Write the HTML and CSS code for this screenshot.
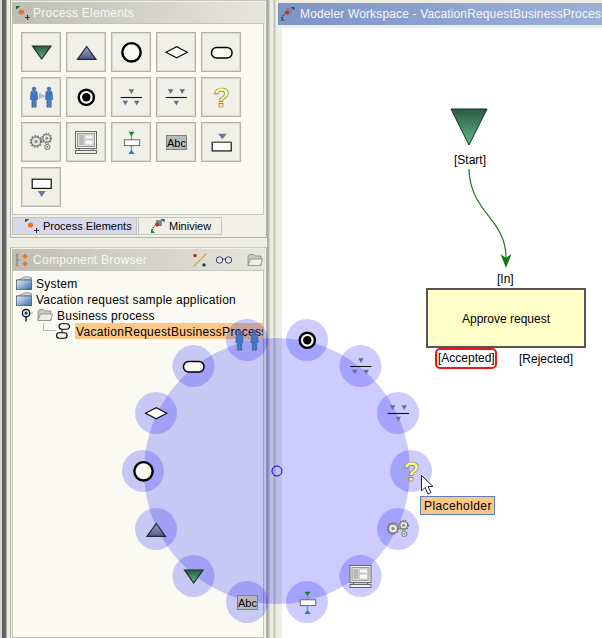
FILE: index.html
```html
<!DOCTYPE html>
<html lang="en">
<head>
    <meta charset="UTF-8">
    <meta name="viewport" content="width=device-width, initial-scale=1.0">
    <title>Modeler Workspace</title>
    <link rel="stylesheet" href="styles.css">
</head>
<body>
    <!-- shared icons -->
    <svg class="sprite" aria-hidden="true">
        <defs>
            <linearGradient id="greenFill" x1="0" y1="0" x2="0" y2="1">
                <stop offset="0" stop-color="#2b5a48"/>
                <stop offset="1" stop-color="#62b888"/>
            </linearGradient>
            <linearGradient id="blueFill" x1="0" y1="0" x2="0" y2="1">
                <stop offset="0" stop-color="#9aa4cc"/>
                <stop offset="1" stop-color="#4f5a88"/>
            </linearGradient>
            <linearGradient id="folderBlue" x1="0" y1="0" x2="1" y2="1">
                <stop offset="0" stop-color="#e8f0f8"/>
                <stop offset="1" stop-color="#2f6aa8"/>
            </linearGradient>
        </defs>
        <symbol id="i-down" viewBox="0 0 40 40">
            <path d="M11.5 14H30L20.7 27Z" fill="url(#greenFill)" stroke="#1c2c24" stroke-width="1.2"/>
        </symbol>
        <symbol id="i-up" viewBox="0 0 40 40">
            <path d="M11.5 27.3H30L20.7 14.5Z" fill="url(#blueFill)" stroke="#23263a" stroke-width="1.2"/>
        </symbol>
        <symbol id="i-circle" viewBox="0 0 40 40">
            <circle cx="20.5" cy="20.3" r="9.2" fill="#fbfaf2" stroke="#000" stroke-width="2.4"/>
        </symbol>
        <symbol id="i-diamond" viewBox="0 0 40 40">
            <path d="M10 20.3L20.7 14.8L31.3 20.3L20.7 25.8Z" fill="#fff" stroke="#111" stroke-width="1.2"/>
        </symbol>
        <symbol id="i-round" viewBox="0 0 40 40">
            <rect x="10.5" y="15.5" width="20.5" height="10.5" rx="5" fill="#fbfaf2" stroke="#000" stroke-width="1.5"/>
        </symbol>
        <symbol id="i-people" viewBox="0 0 40 40">
            <g fill="#3f78c8" stroke="#2c5288" stroke-width=".5">
                <circle cx="13" cy="12" r="1.9"/>
                <path d="M10 14.5h6l.8 8h-1.6v7.8h-1.7v-7h-.9v7h-1.7v-7.8H9.2Z"/>
                <circle cx="28" cy="12" r="1.9"/>
                <path d="M25 14.5h6l.8 8h-1.6v7.8h-1.7v-7h-.9v7h-1.7v-7.8h-1.6Z"/>
            </g>
            <path d="M18.5 16.5l5 2.5-5 2.5Z" fill="#b8b8d0" stroke="#8888a0" stroke-width=".5"/>
        </symbol>
        <symbol id="i-target" viewBox="0 0 40 40">
            <circle cx="20.3" cy="20.3" r="7.6" fill="#fbfaf2" stroke="#000" stroke-width="2.4"/>
            <circle cx="20.3" cy="20.3" r="4.2" fill="#000"/>
        </symbol>
        <symbol id="i-split" viewBox="0 0 40 40">
            <path d="M9.7 20.5H31" stroke="#111" stroke-width="1.1"/>
            <path d="M17.6 12.3h5.6l-2.8 4.6ZM11.5 23.7h5.6l-2.8 4.6ZM22.9 23.7h5.6l-2.8 4.6Z" fill="#667090"/>
        </symbol>
        <symbol id="i-join" viewBox="0 0 40 40">
            <path d="M9.7 20.5H31" stroke="#111" stroke-width="1.1"/>
            <path d="M11.8 12.3h5.6l-2.8 4.6ZM23.4 12.3H29l-2.8 4.6ZM17.6 23.7h5.6l-2.8 4.6Z" fill="#667090"/>
        </symbol>
        <symbol id="i-gears" viewBox="0 0 40 40">
            <g fill="#e4e4e0" stroke="#777">
                <circle cx="15" cy="19.5" r="4.6" stroke-width="1.2"/>
                <circle cx="15" cy="19.5" r="5.6" fill="none" stroke-width="1.6" stroke-dasharray="1.6 1.4"/>
                <circle cx="25.7" cy="16.3" r="3.8" stroke-width="1.1"/>
                <circle cx="25.7" cy="16.3" r="4.8" fill="none" stroke-width="1.4" stroke-dasharray="1.4 1.2"/>
                <circle cx="26.3" cy="25" r="2.6" stroke-width="1"/>
            </g>
            <circle cx="15" cy="19.5" r="1.6" fill="#888"/>
            <circle cx="25.7" cy="16.3" r="1.4" fill="#888"/>
            <circle cx="26.3" cy="25" r="1" fill="#888"/>
        </symbol>
        <symbol id="i-screen" viewBox="0 0 40 40">
            <rect x="9.5" y="9.5" width="21" height="17" fill="#f4f4f0" stroke="#666"/>
            <rect x="11.5" y="11.5" width="17" height="13" fill="#ddd" stroke="#999"/>
            <rect x="13" y="13" width="5" height="10" fill="#bbb"/>
            <path d="M19 13h8v4h-8ZM19 18h8v5h-8Z" fill="#f8f8f4" stroke="#aaa" stroke-width=".5"/>
            <rect x="9.5" y="28.5" width="21" height="3" fill="#eee" stroke="#666"/>
            <path d="M13 26.5v2M27 26.5v2" stroke="#666"/>
        </symbol>
        <symbol id="i-call" viewBox="0 0 40 40">
            <path d="M20.5 13v16" stroke="#9090c0" stroke-width="1.4"/>
            <path d="M17.5 9.7h6l-3 4.3Z" fill="#118811"/>
            <path d="M17.5 32h6l-3-4.3Z" fill="#1878e0"/>
            <rect x="13.3" y="17.8" width="15.4" height="5.8" fill="#fff" stroke="#666"/>
        </symbol>
        <symbol id="i-abc" viewBox="0 0 40 40">
            <rect x="10.5" y="13.5" width="20" height="14" fill="#b8b8b8" stroke="#808080"/>
        </symbol>
        <symbol id="i-boxtop" viewBox="0 0 40 40">
            <path d="M17 11.7h8.7l-4.3 5.6Z" fill="#6f7a9a"/>
            <rect x="11.2" y="20.3" width="19" height="8.6" fill="#fff" stroke="#111" stroke-width="1.2"/>
            <path d="M11.2 20h19" stroke="#999" stroke-width="1"/>
        </symbol>
        <symbol id="i-boxbottom" viewBox="0 0 40 40">
            <rect x="11.2" y="12.2" width="19" height="9.2" fill="#fff" stroke="#111" stroke-width="1.2"/>
            <path d="M16.7 24h8l-4 6Z" fill="#6f7a9a"/>
        </symbol>
        <symbol id="i-add" viewBox="0 0 16 16">
            <path d="M1 1h4.5L1 4.5Z" fill="#1a6a3a"/>
            <circle cx="6.5" cy="7" r="2.6" fill="#f07020"/>
            <path d="M12.5 10v5M10 12.5h5" stroke="#333" stroke-width="1"/>
        </symbol>
        <symbol id="i-mini" viewBox="0 0 16 16">
            <rect x="6" y="2" width="6" height="6" fill="#888"/>
            <path d="M10.5 1h4v3.5Z" fill="#1050a0"/>
            <path d="M5.5 7c-2 1.5-3 3.5-3.500 6" fill="none" stroke="#222" stroke-dasharray="1.5 1"/>
            <circle cx="7" cy="6.5" r="2" fill="#e02020"/>
            <path d="M1 11v4h4Z" fill="#108040"/>
        </symbol>
        <symbol id="i-comp" viewBox="0 0 16 16">
            <path d="M3.5 2H2v12h1.500M2 8h3" fill="none" stroke="#777"/>
            <path d="M10 1.5l2.700 2.700L10 7 7.300 4.200ZM10 9l2.700 2.700L10 14.500l-2.700-2.800Z" fill="#e87820"/>
        </symbol>
        <symbol id="i-link" viewBox="0 0 16 16">
            <path d="M1.5 14.5L14.5 1.5" stroke="#e8a030" stroke-width="1.2"/>
            <circle cx="3" cy="3.5" r="1.7" fill="#d02020"/>
            <circle cx="12" cy="13" r="1.7" fill="#104080"/>
        </symbol>
        <symbol id="i-glass" viewBox="0 0 18 12">
            <circle cx="4.5" cy="6" r="3.2" fill="#dfe6f0" stroke="#445"/>
            <circle cx="13.5" cy="6" r="3.2" fill="#dfe6f0" stroke="#445"/>
            <path d="M7.5 5h3" stroke="#445"/>
        </symbol>
        <symbol id="i-folder" viewBox="0 0 16 14">
            <path d="M1 12.5V3l1.500-1.500h4L8 3h6v9.500Z" fill="#c8c8c0" stroke="#888" stroke-width=".8"/>
            <path d="M1 12.5L3.500 6H15.500l-2 6.500Z" fill="#eeeee8" stroke="#888" stroke-width=".8"/>
        </symbol>
        <symbol id="i-project" viewBox="0 0 16 14">
            <path d="M.5 4.5L10 .5l5.500 1v2Z" fill="#c8d8e8" stroke="#667" stroke-width=".6"/>
            <rect x=".5" y="4" width="15" height="10" fill="url(#folderBlue)" stroke="#335" stroke-width=".6"/>
        </symbol>
        <symbol id="i-pin" viewBox="0 0 14 16">
            <path d="M10 6h4" stroke="#8aa" stroke-width="1"/>
            <path d="M6.5 9v6" stroke="#000" stroke-width="1.4"/>
            <circle cx="6.5" cy="6" r="4" fill="#c8d8e8" stroke="#000" stroke-width="1.3"/>
            <circle cx="6.5" cy="6" r="1.5" fill="#236"/>
        </symbol>
        <symbol id="i-node" viewBox="0 0 14 16">
            <rect x="3" y=".8" width="10.5" height="5.4" rx="2.7" fill="#fbfaf2" stroke="#000" stroke-width="1.1"/>
            <rect x=".6" y="9.8" width="10.5" height="5.4" rx="2.7" fill="#fbfaf2" stroke="#000" stroke-width="1.1"/>
            <path d="M6 6.2v3.6" stroke="#000"/>
        </symbol>
    </svg>

    <div class="app">
        <div class="rail"></div>

        <div class="left">
            <section class="panel panel-top">
                <div class="panel-head">
                    <svg class="head-icon"><use href="#i-add"/></svg>
                    <span class="panel-title">Process Elements</span>
                </div>
                <div class="palette">
                    <div class="tool"><svg><use href="#i-down"/></svg></div>
                    <div class="tool"><svg><use href="#i-up"/></svg></div>
                    <div class="tool"><svg><use href="#i-circle"/></svg></div>
                    <div class="tool"><svg><use href="#i-diamond"/></svg></div>
                    <div class="tool"><svg><use href="#i-round"/></svg></div>
                    <div class="tool"><svg><use href="#i-people"/></svg></div>
                    <div class="tool"><svg><use href="#i-target"/></svg></div>
                    <div class="tool"><svg><use href="#i-split"/></svg></div>
                    <div class="tool"><svg><use href="#i-join"/></svg></div>
                    <div class="tool"><svg><text x="20.5" y="29.5" text-anchor="middle" class="qmark">?</text></svg></div>
                    <div class="tool"><svg><use href="#i-gears"/></svg></div>
                    <div class="tool"><svg><use href="#i-screen"/></svg></div>
                    <div class="tool"><svg><use href="#i-call"/></svg></div>
                    <div class="tool"><svg><use href="#i-abc"/><text x="20.5" y="24.5" text-anchor="middle" class="abc">Abc</text></svg></div>
                    <div class="tool"><svg><use href="#i-boxtop"/></svg></div>
                    <div class="tool"><svg><use href="#i-boxbottom"/></svg></div>
                </div>
                <div class="tabs">
                    <div class="tab tab-active"><svg class="head-icon"><use href="#i-add"/></svg>Process Elements</div>
                    <div class="tab"><svg class="head-icon"><use href="#i-mini"/></svg>Miniview</div>
                </div>
            </section>

            <section class="panel panel-bottom">
                <div class="panel-head">
                    <svg class="head-icon"><use href="#i-comp"/></svg>
                    <span class="panel-title">Component Browser</span>
                    <div class="head-tools">
                        <svg class="tool-link"><use href="#i-link"/></svg>
                        <svg class="tool-glass"><use href="#i-glass"/></svg>
                        <svg class="tool-folder"><use href="#i-folder"/></svg>
                    </div>
                </div>
                <div class="tree">
                    <div class="row"><svg class="tree-icon"><use href="#i-project"/></svg><span>System</span></div>
                    <div class="row"><svg class="tree-icon"><use href="#i-project"/></svg><span>Vacation request sample application</span></div>
                    <div class="row row-child">
                        <svg class="tree-pin"><use href="#i-pin"/></svg>
                        <svg class="tree-icon"><use href="#i-folder"/></svg>
                        <span>Business process</span>
                    </div>
                    <div class="row row-leaf">
                        <span class="elbow"></span>
                        <svg class="tree-node"><use href="#i-node"/></svg>
                        <span class="selected">VacationRequestBusinessProcess</span>
                    </div>
                </div>
            </section>
        </div>

        <div class="splitter"></div>

        <main class="work">
            <div class="work-head">
                <svg class="head-icon"><use href="#i-mini"/></svg>
                <span class="work-title">Modeler Workspace - VacationRequestBusinessProcess</span>
            </div>
            <div class="canvas">
                <svg class="wires">
                    <path d="M168 81H204L186 117Z" class="start"/>
                    <path d="M186 141C187 185 223 190 223 230" class="wire"/>
                    <path d="M217.5 226L223 240L228.5 226L223 230Z" class="arrow"/>
                </svg>
                <span class="label label-start">[Start]</span>
                <span class="label label-in">[In]</span>
                <div class="task">Approve request</div>
                <span class="label label-accepted">[Accepted]</span>
                <span class="label label-rejected">[Rejected]</span>
            </div>
        </main>

        <!-- radial menu, drawn over everything -->
        <svg class="radial" viewBox="0 0 602 638">
            <circle cx="277" cy="471" r="133" class="blob"/>
            <circle cx="411" cy="471" r="21" class="blob"/>
            <circle cx="398" cy="413" r="21" class="blob"/>
            <circle cx="360.5" cy="366" r="21" class="blob"/>
            <circle cx="307" cy="340" r="21" class="blob"/>
            <circle cx="247" cy="340" r="21" class="blob"/>
            <circle cx="193.5" cy="366" r="21" class="blob"/>
            <circle cx="156" cy="413" r="21" class="blob"/>
            <circle cx="143" cy="471" r="21" class="blob"/>
            <circle cx="156" cy="529" r="21" class="blob"/>
            <circle cx="193.5" cy="576" r="21" class="blob"/>
            <circle cx="247" cy="602" r="21" class="blob"/>
            <circle cx="307" cy="602" r="21" class="blob"/>
            <circle cx="360.5" cy="576" r="21" class="blob"/>
            <circle cx="398" cy="529" r="21" class="blob"/>
            <circle cx="277" cy="471" r="5" class="hub"/>
            <use href="#i-people" x="226.5" y="320" width="40" height="40"/>
            <use href="#i-target" x="287" y="320" width="40" height="40"/>
            <use href="#i-split" x="340.5" y="346" width="40" height="40"/>
            <use href="#i-join" x="378" y="393" width="40" height="40"/>
            <text x="411.5" y="480.5" text-anchor="middle" class="qmark">?</text>
            <use href="#i-gears" x="378" y="509" width="40" height="40"/>
            <use href="#i-screen" x="340.5" y="556" width="40" height="40"/>
            <use href="#i-call" x="287" y="582" width="40" height="40"/>
            <use href="#i-abc" x="227" y="582" width="40" height="40"/>
            <text x="247.5" y="606.5" text-anchor="middle" class="abc">Abc</text>
            <use href="#i-down" x="173" y="556" width="40" height="40"/>
            <use href="#i-up" x="135.5" y="509" width="40" height="40"/>
            <use href="#i-circle" x="123" y="451" width="40" height="40"/>
            <use href="#i-diamond" x="135.5" y="393" width="40" height="40"/>
            <use href="#i-round" x="173" y="346" width="40" height="40"/>
            <path d="M421.5 475.5V491L425 487.5L428 494L431 492.5L428 486.5H433Z" class="cursor"/>
        </svg>
        <div class="tooltip">Placeholder</div>
    </div>
</body>
</html>
```

FILE: styles.css
```css
* {
    box-sizing: border-box;
}
html, body {
    margin: 0;
    height: 100%;
    overflow: hidden;
    background-color: #fff;
}
body {
    font-family: "Liberation Sans", Arial, sans-serif;
    font-size: 12px;
    color: #000;
}
.sprite {
    position: absolute;
    width: 0;
    height: 0;
}
.qmark {
    font-family: "Liberation Sans", sans-serif;
    font-size: 27px;
    font-weight: bold;
    fill: #ffff88;
    stroke: #77775a;
    stroke-width: .7px;
}
.abc {
    font-family: "Liberation Sans", sans-serif;
    font-size: 11px;
    fill: #000;
}

.app {
    position: relative;
    display: flex;
    width: 602px;
    height: 638px;
    background-color: #eeeee4;
}
.rail {
    width: 10px;
    background: linear-gradient(to right, #d8d8d0 0, #d8d8d0 2px, #5a5a5a 2px, #6e6e6e 6px, #eeeee4 7px);
}

.left {
    width: 257px;
    display: flex;
    flex-direction: column;
    gap: 9px;
}
.panel {
    display: flex;
    flex-direction: column;
    background-color: #f1f0e6;
    border: 1px solid #b0b0a8;
    border-top-color: #c8c8c0;
    padding: 1px 1px 0;
}
.panel-top {
    height: 238px;
}
.panel-bottom {
    flex: 1;
    border-bottom: 0;
}
.panel-head {
    display: flex;
    align-items: center;
    gap: 2px;
    height: 21px;
    flex-shrink: 0;
    padding-left: 3px;
    background: linear-gradient(to right, #bdbdb6, #e6e6de);
}
.panel-title {
    color: #f6f6f2;
    font-size: 12px;
    letter-spacing: .27px;
}
.head-icon {
    width: 16px;
    height: 16px;
    flex-shrink: 0;
}
.head-tools {
    display: flex;
    align-items: center;
    margin-left: auto;
    margin-right: 2px;
    gap: 7px;
}
.tool-link {
    width: 16px;
    height: 16px;
}
.tool-glass {
    width: 18px;
    height: 12px;
}
.tool-folder {
    width: 16px;
    height: 14px;
    margin-left: 7px;
}

.palette {
    height: 192px;
    display: grid;
    grid-template-columns: repeat(5, 40px);
    grid-auto-rows: 40px;
    gap: 5px;
    padding: 8px 0 0 8px;
    margin-right: 1px;
    background-color: #fbfaf2;
    border: 1px solid #c4c4bc;
}
.tool {
    background-color: #f1f0e8;
    border: 1px solid #b4b4ac;
    box-shadow: inset 0 0 0 1px #d8d8d0;
}
.tool svg {
    display: block;
    width: 40px;
    height: 40px;
    margin: -1px;
}

.tabs {
    display: flex;
    gap: 1px;
    margin-top: 2px;
}
.tab {
    display: flex;
    align-items: center;
    gap: 3px;
    height: 18px;
    padding-left: 11px;
    width: 84px;
    font-size: 11px;
    white-space: nowrap;
    border: 1px solid #c4c4bc;
    background-color: #f1f0e6;
}
.tab-active {
    width: 125px;
    background-color: #d8d8ec;
}

.tree {
    flex: 1;
    padding-top: 4px;
    margin-right: 1px;
    background-color: #fbfaf2;
    border: 1px solid #c4c4bc;
    overflow: hidden;
    font-size: 12px;
    letter-spacing: .23px;
}
.row {
    display: flex;
    align-items: flex-start;
    gap: 4px;
    height: 16px;
    line-height: 18px;
    padding-left: 3px;
    white-space: nowrap;
}
.row-child {
    padding-left: 7px;
}
.row-leaf {
    padding-left: 30px;
    gap: 0;
}
.tree-icon {
    width: 16px;
    height: 14px;
    margin-top: 1px;
    flex-shrink: 0;
}
.tree-pin {
    width: 13px;
    height: 16px;
    flex-shrink: 0;
}
.tree-node {
    width: 14px;
    height: 16px;
    flex-shrink: 0;
    margin-right: 5px;
}
.elbow {
    width: 13px;
    height: 8px;
    border-left: 1px solid #a8b8d0;
    border-bottom: 1px solid #a8b8d0;
    flex-shrink: 0;
}
.selected {
    flex: 1;
    height: 16px;
    padding-left: 1px;
    letter-spacing: .3px;
    background-color: #fdc887;
    overflow: hidden;
}

.splitter {
    width: 11px;
    background: linear-gradient(to right, #a4a4a0 0, #bbb 2px, #e8e8e0 3px, #eeeee4 6px, #c4c4bc 7px, #c4c4bc 8px, #eeeee4 9px);
}

.work {
    flex: 1;
    min-width: 0;
    display: flex;
    flex-direction: column;
    padding-top: 3px;
}
.work-head {
    display: flex;
    align-items: center;
    gap: 4px;
    height: 22px;
    padding-left: 2px;
    flex-shrink: 0;
    overflow: hidden;
    background: linear-gradient(to right, #7e95c6, #9cb0d6);
}
.work-title {
    color: #f4f6fa;
    font-size: 12px;
    letter-spacing: .15px;
    white-space: nowrap;
}
.canvas {
    position: relative;
    flex: 1;
    margin-top: 3px;
    margin-left: 4px;
    background-color: #fff;
}
.wires {
    position: absolute;
    left: 1px;
    top: 0;
    width: 319px;
    height: 610px;
}
.start {
    fill: url(#greenFill);
    stroke: #1c2c24;
    stroke-width: 1;
}
.wire {
    fill: none;
    stroke: #187818;
    stroke-width: 1.2;
}
.arrow {
    fill: #0e7a0e;
}
.label {
    position: absolute;
    white-space: nowrap;
    line-height: 14px;
}
.label-start {
    left: 172px;
    top: 125px;
}
.label-in {
    left: 215px;
    top: 244px;
}
.label-accepted {
    left: 153px;
    top: 320px;
    width: 62px;
    height: 21px;
    padding: 1px 0 0 1px;
    border: 2px solid #f01818;
    border-radius: 5px;
}
.label-rejected {
    left: 237px;
    top: 324px;
}
.task {
    position: absolute;
    left: 144px;
    top: 260px;
    width: 160px;
    height: 60px;
    padding-top: 1px;
    display: flex;
    align-items: center;
    justify-content: center;
    background-color: #ffffc8;
    border: 2px solid #555;
}

.radial {
    position: absolute;
    left: 0;
    top: 0;
    width: 602px;
    height: 638px;
}
.blob {
    fill: rgba(0, 0, 255, .2);
}
.hub {
    fill: none;
    stroke: #0000e0;
    stroke-width: 1;
}
.cursor {
    fill: #fff;
    stroke: #223;
    stroke-width: 1;
}
.tooltip {
    position: absolute;
    left: 420px;
    top: 496px;
    width: 75px;
    height: 19px;
    padding-left: 3px;
    line-height: 18px;
    letter-spacing: .4px;
    background-color: #fdc887;
    border: 1px solid #5a82b8;
}
```
